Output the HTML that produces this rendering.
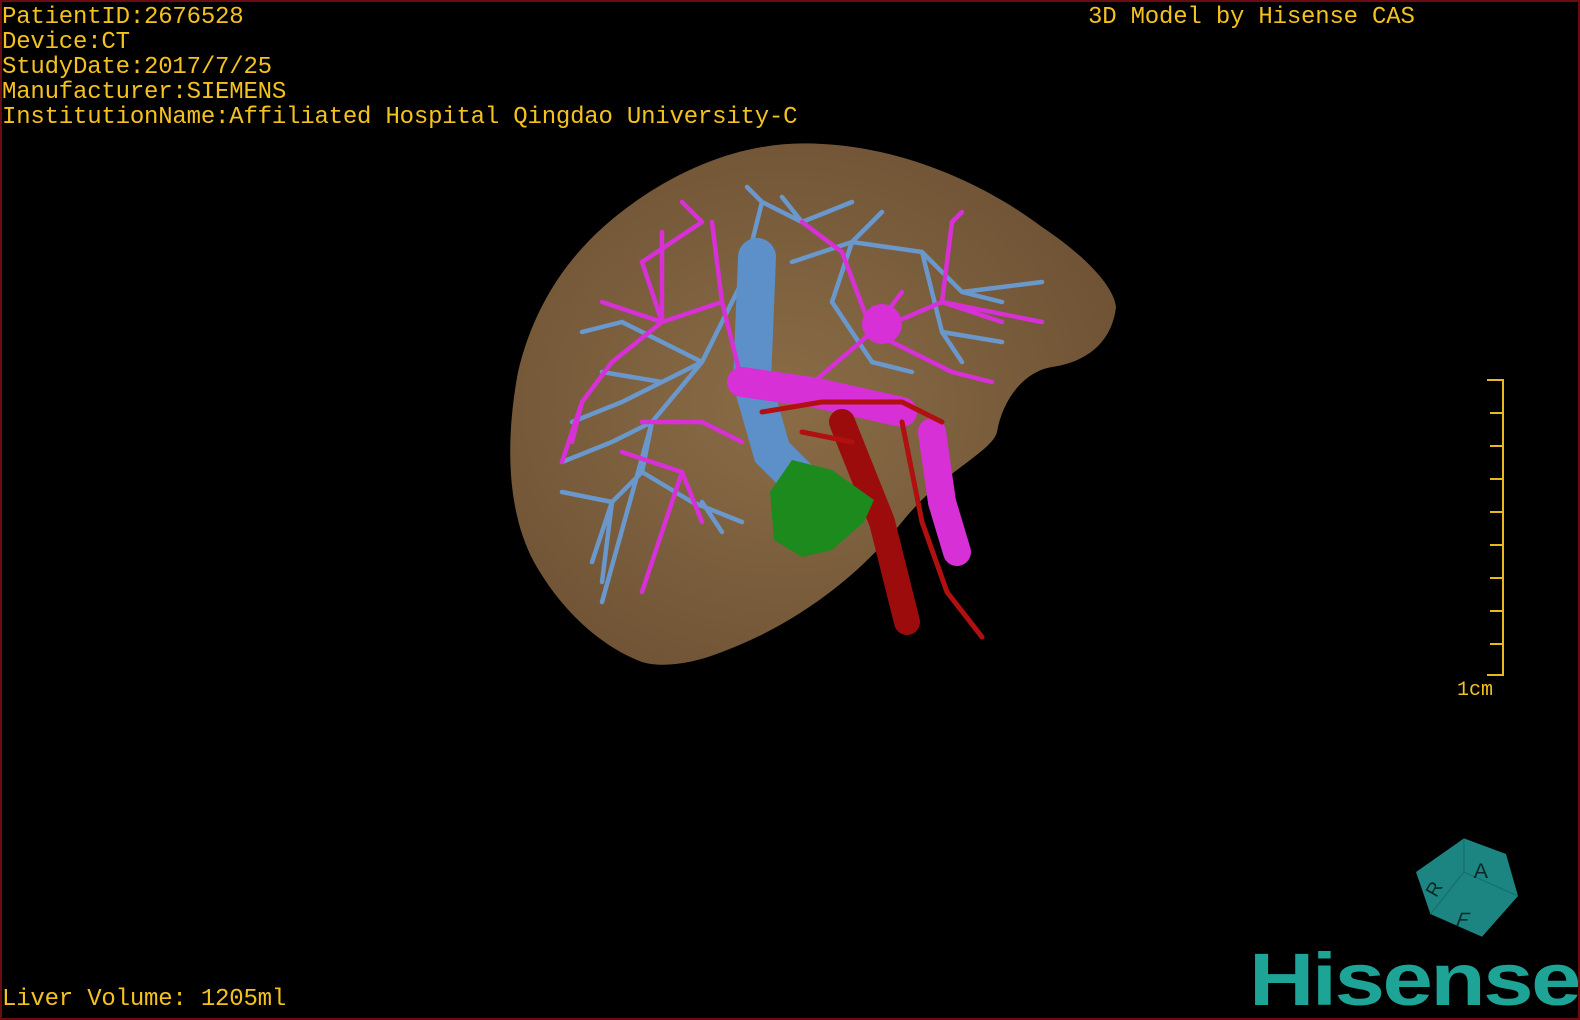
<!DOCTYPE html>
<html><head><meta charset="utf-8"><style>
html,body{margin:0;padding:0;background:#000;}
#s{position:relative;width:1580px;height:1020px;background:#000;overflow:hidden;box-sizing:border-box;border:2px solid #6a0c10;}
.t{position:absolute;color:#f4c21e;font-family:"Liberation Mono",monospace;font-size:24px;line-height:25px;white-space:pre;letter-spacing:-0.2px;}
</style></head><body><div id="s">
<div class="t" style="left:0;top:3px">PatientID:2676528
Device:CT
StudyDate:2017/7/25
Manufacturer:SIEMENS
InstitutionName:Affiliated Hospital Qingdao University-C</div>
<div class="t" style="left:1086px;top:3px">3D Model by Hisense CAS</div>
<div class="t" style="left:0;top:985px">Liver Volume: 1205ml</div>
<div class="t" style="left:1455px;top:676px;font-size:20px;letter-spacing:0">1cm</div>
<svg width="1580" height="1020" style="position:absolute;left:0;top:0">
<g stroke="#e8b820" stroke-width="2" fill="none">
<path d="M1485 378H1501V673H1485"/>
<path d="M1488 411H1501M1488 444H1501M1488 477H1501M1488 510H1501M1488 543H1501M1488 576H1501M1488 609H1501M1488 642H1501"/>
</g>
<defs><radialGradient id="lv" cx="0.45" cy="0.5" r="0.6"><stop offset="0" stop-color="#8a6c46"/><stop offset="1" stop-color="#6e5234"/></radialGradient></defs>
<path d="M640 660C600 645 560 610 532 560C505 510 503 440 516 370C535 290 580 235 640 195C700 155 760 138 820 142C900 146 980 180 1040 225C1085 255 1112 285 1114 305C1110 340 1085 360 1050 365C1020 370 1000 400 995 430C990 450 940 470 900 520C860 570 800 620 720 650C690 662 660 666 640 660Z" fill="url(#lv)"/>
<g fill="none" stroke-linecap="round">
<g stroke="#6a98cc" stroke-width="4.5">
<path d="M560 460L610 440L650 420L700 360L740 280L760 200M650 420L640 470L610 500L590 560M640 470L690 500L740 520M700 360L620 320L580 330M790 260L850 240L920 250L960 290L1000 300M920 250L940 330L960 360M850 240L830 300L870 360L910 370M610 500L560 490M660 380L600 370M760 200L800 220L850 200M700 360L620 400L570 420M760 200L745 185M800 220L780 195M960 290L1040 280M940 330L1000 340M610 500L600 580M650 420L600 600M700 500L720 530M850 240L880 210"/>
</g>
<path d="M755 255L750 380L770 450L800 480" stroke="#5d8fc8" stroke-width="38"/>
<g stroke="#d630d6" stroke-width="4.5">
<path d="M600 300L660 320L720 300L740 380L800 390L870 330L940 300L1000 320M660 320L640 260L700 220M720 300L710 220M870 330L840 250L800 220M870 330L950 370L990 380M940 300L950 220M660 320L610 360L580 400L560 460M620 450L680 470L700 520M680 470L650 560L640 590M870 330L900 290M640 420L700 420M700 220L680 200M660 320L660 230M940 300L1040 320M950 220L960 210M580 400L570 440M700 420L740 440"/>
</g>
<path d="M740 380L810 390L900 410" stroke="#d630d6" stroke-width="30"/>
<circle cx="880" cy="322" r="20" fill="#d630d6" stroke="none"/>
<path d="M930 430L940 500L955 550" stroke="#d630d6" stroke-width="28"/>
<path d="M840 420L880 520L905 620" stroke="#9c0c0c" stroke-width="26"/>
<g stroke="#b01010" stroke-width="5"><path d="M760 410L820 400L900 400L940 420M900 420L920 520L945 590L980 635M800 430L850 440"/></g>
</g>
<path d="M790 458L830 468L872 498L862 520L830 548L800 555L772 538L768 490Z" fill="#1c8a1c"/>
<g transform="translate(1474,882) scale(1.2)">
<path d="M-50 -10L-10 -38L25 -25L35 10L5 44L-38 25Z" fill="#1c8582"/>
<path d="M-10 -38L-10 -10L35 10M-10 -10L-38 25" stroke="#176f6c" stroke-width="1" fill="none"/>
<text x="-2" y="-5" font-family="Liberation Sans,sans-serif" font-size="18" fill="#0a2828">A</text>
<text x="-40" y="10" font-family="Liberation Sans,sans-serif" font-size="16" fill="#0a2828" transform="rotate(-60 -35 5)">R</text>
<text x="-5" y="35" font-family="Liberation Sans,sans-serif" font-size="16" fill="#0a2828" transform="skewX(-20)">F</text>
</g>
<text x="1247" y="1003" font-family="Liberation Sans,sans-serif" font-weight="bold" font-size="74" fill="#1ea496" letter-spacing="-2" textLength="330" lengthAdjust="spacingAndGlyphs">Hisense</text>
</svg>
</div></body></html>
